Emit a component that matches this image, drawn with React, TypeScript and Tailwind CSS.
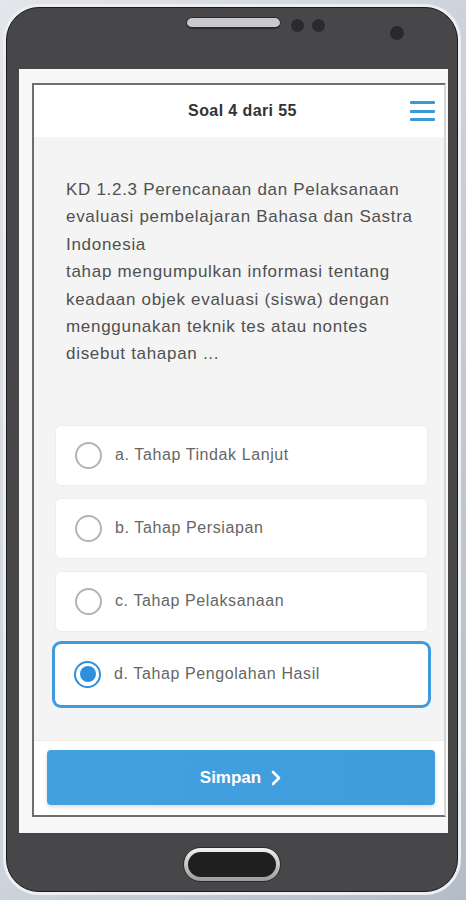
import React from "react";

const options = [
  { key: "a", label: "a. Tahap Tindak Lanjut" },
  { key: "b", label: "b. Tahap Persiapan" },
  { key: "c", label: "c. Tahap Pelaksanaan" },
  { key: "d", label: "d. Tahap Pengolahan Hasil" },
];

function Chevron() {
  return (
    <svg width="12" height="18" viewBox="0 0 12 18" fill="none">
      <path d="M3 3 L9 9 L3 15" stroke="white" strokeWidth="2.6" strokeLinecap="round" strokeLinejoin="round" />
    </svg>
  );
}

export default function App() {
  const selected = "d";
  return (
    <div className="w-[466px] h-[900px] bg-gradient-to-br from-[#e3e6ea] via-[#cdd3da] to-[#b3bcc7] pt-[4px] pl-[3px] pr-[5px] pb-[5px] font-['Liberation_Sans',Arial,sans-serif]">
      <div className="h-full w-full rounded-[36px] border-[3px] border-[#eceef1]">
        <div className="h-full w-full rounded-[33px] bg-[#47474a] border border-[#1c1c1e] flex flex-col">
          {/* top bar */}
          <div className="h-[61px] flex items-start pl-[179px] pt-[9px]">
            <div className="w-[95px] h-[12px] rounded-full bg-[#c8c9cb] border border-[#2a2a2c] border-b-[2px]" />
            <div className="ml-[10px] mt-[2px] w-[13px] h-[13px] rounded-full bg-[#2b2b2d]" />
            <div className="ml-[8px] mt-[2px] w-[13px] h-[13px] rounded-full bg-[#2b2b2d]" />
            <div className="ml-[65px] mt-[9px] w-[14px] h-[14px] rounded-full bg-[#29292b]" />
          </div>
          {/* screen */}
          <div className="ml-[12px] mr-[9px] h-[764px] bg-[#f7f7f7] pl-[13px] pt-[14px] pr-[2px] pb-[16px]">
            <div className="h-full flex flex-col border-2 border-[#6e6e6e] border-r-[#d6d6d6] bg-white">
              {/* header */}
              <div className="h-[52px] flex items-center pl-[16px] pr-[9px] bg-white">
                <div className="w-[25px]" />
                <div className="flex-1 text-center text-[16px] font-bold tracking-[0.4px] text-[#333333]">
                  Soal 4 dari 55
                </div>
                <div className="w-[25px] flex flex-col gap-[5.5px]">
                  <div className="h-[3px] bg-[#3a9ad9] rounded-[1px]" />
                  <div className="h-[3px] bg-[#3a9ad9] rounded-[1px]" />
                  <div className="h-[3px] bg-[#3a9ad9] rounded-[1px]" />
                </div>
              </div>
              {/* content */}
              <div className="flex-1 bg-[#f4f4f4] pt-[39px]">
                <p className="pl-[32px] w-[390px] text-[17px] tracking-[0.7px] leading-[27.4px] text-[#505050]">
                  KD 1.2.3 Perencanaan dan Pelaksanaan evaluasi pembelajaran Bahasa dan Sastra Indonesia
                  <br />
                  tahap mengumpulkan informasi tentang keadaan objek evaluasi (siswa) dengan menggunakan teknik tes atau nontes disebut tahapan ...
                </p>
                <div className="mt-[57px] ml-[21px] mr-[16px] flex flex-col gap-[12px]">
                  {options.map((o) => {
                    const isSel = o.key === selected;
                    return (
                      <div
                        key={o.key}
                        className={
                          isSel
                            ? "h-[61px] flex items-center pl-[19px] gap-[13px] bg-white rounded-[6px] shadow-[0_0_0_3px_#3f9be0]"
                            : "h-[61px] flex items-center pl-[19px] gap-[13px] bg-white rounded-[6px] border border-[#ededed]"
                        }
                      >
                        {isSel ? (
                          <div className="w-[27px] h-[27px] rounded-full border-[2.5px] border-[#2f8fdf] flex items-center justify-center">
                            <div className="w-[16px] h-[16px] rounded-full bg-[#2f8fdf]" />
                          </div>
                        ) : (
                          <div className="w-[27px] h-[27px] rounded-full border-2 border-[#b3b3b3]" />
                        )}
                        <span className="text-[16px] tracking-[0.6px] text-[#666666]">{o.label}</span>
                      </div>
                    );
                  })}
                </div>
              </div>
              {/* footer */}
              <div className="border-t border-[#ebebeb] bg-white pt-[9px] pb-[10px] pl-[13px] pr-[9px]">
                <div className="h-[55px] rounded-[4px] bg-gradient-to-r from-[#43a1e2] to-[#3f9cdd] shadow-[0_2px_4px_rgba(0,0,0,0.15)] flex items-center justify-center gap-[9px]">
                  <span className="text-[17px] font-bold text-white">Simpan</span>
                  <Chevron />
                </div>
              </div>
            </div>
          </div>
          {/* bottom */}
          <div className="flex-1 flex justify-center pt-[14px]">
            <div className="w-[98px] h-[35px] rounded-full bg-gradient-to-b from-[#f2f2f2] to-[#9c9c9c] border border-[#2a2a2a] p-[4px]">
              <div className="w-full h-full rounded-full bg-[#1f1f20]" />
            </div>
          </div>
        </div>
      </div>
    </div>
  );
}
